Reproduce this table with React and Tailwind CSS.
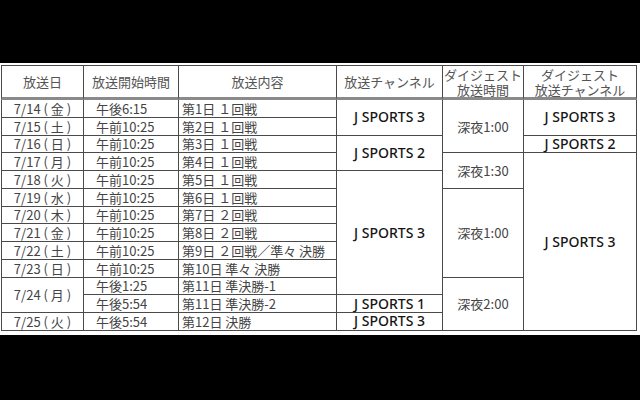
const rows = [
  { date: "7/14 ( 金 )", time: "午後6:15", content: "第1日 １回戦" },
  { date: "7/15 ( 土 )", time: "午前10:25", content: "第2日 １回戦" },
  { date: "7/16 ( 日 )", time: "午前10:25", content: "第3日 １回戦" },
  { date: "7/17 ( 月 )", time: "午前10:25", content: "第4日 １回戦" },
  { date: "7/18 ( 火 )", time: "午前10:25", content: "第5日 １回戦" },
  { date: "7/19 ( 水 )", time: "午前10:25", content: "第6日 １回戦" },
  { date: "7/20 ( 木 )", time: "午前10:25", content: "第7日 ２回戦" },
  { date: "7/21 ( 金 )", time: "午前10:25", content: "第8日 ２回戦" },
  { date: "7/22 ( 土 )", time: "午前10:25", content: "第9日 ２回戦／準々 決勝" },
  { date: "7/23 ( 日 )", time: "午前10:25", content: "第10日 準々 決勝" },
  { date: "7/24 ( 月 )", dateSpan: 2, time: "午後1:25", content: "第11日 準決勝-1" },
  { date: null, time: "午後5:54", content: "第11日 準決勝-2" },
  { date: "7/25 ( 火 )", time: "午後5:54", content: "第12日 決勝" },
];

// cells that start at a row index, with their rowspan
const channel = { 0: ["J SPORTS 3", 2], 2: ["J SPORTS 2", 2], 4: ["J SPORTS 3", 7], 11: ["J SPORTS 1", 1], 12: ["J SPORTS 3", 1] };
const digestTime = { 0: ["深夜1:00", 3], 3: ["深夜1:30", 2], 5: ["深夜1:00", 5], 10: ["深夜2:00", 3] };
const digestCh = { 0: ["J SPORTS 3", 2], 2: ["J SPORTS 2", 1], 3: ["J SPORTS 3", 10] };

const cell = "border-r border-b border-[#4a4a4a] p-0 leading-none";
const jp = "text-[13px] text-[#444]";
const js = "text-center text-[14px] font-medium text-[#151515] font-['Noto_Sans',sans-serif]";
const head = "border-t border-b-[3px] border-b-[#8a8a8a] font-normal text-[13px] text-[#555] text-center";

export default function App() {
  return (
    <div className="w-[640px] h-[400px] bg-black flex flex-col font-['Noto_Sans_CJK_JP',sans-serif]">
      <div className="h-[63px]" />
      <div className="h-[272px] bg-white pl-[1px] pt-[2px]">
        <table className="w-[636px] border-separate border-spacing-0 table-fixed">
          <colgroup>
            <col className="w-[83px]" />
            <col className="w-[95px]" />
            <col className="w-[158px]" />
            <col className="w-[106px]" />
            <col className="w-[81px]" />
            <col className="w-[113px]" />
          </colgroup>
          <thead>
            <tr className="h-[35px]">
              {["放送日", "放送開始時間", "放送内容", "放送チャンネル"].map((h, i) => (
                <th key={h} className={`${cell} ${head} ${i === 0 ? "border-l" : ""}`}>
                  {h}
                </th>
              ))}
              <th className={`${cell} ${head} !leading-[15px]`}>
                ダイジェスト<br />放送時間
              </th>
              <th className={`${cell} ${head} !leading-[15px]`}>
                ダイジェスト<br />放送チャンネル
              </th>
            </tr>
          </thead>
          <tbody>
            {rows.map((r, i) => (
              <tr key={i} className="h-[17.75px]">
                {r.date && (
                  <td rowSpan={r.dateSpan || 1} className={`${cell} border-l ${jp} text-center whitespace-pre`}>
                    {r.date}
                  </td>
                )}
                <td className={`${cell} ${jp} pl-[12px]`}>{r.time}</td>
                <td className={`${cell} ${jp} pl-[3px] whitespace-nowrap`}>{r.content}</td>
                {channel[i] && (
                  <td rowSpan={channel[i][1]} className={`${cell} ${js}`}>
                    {channel[i][0]}
                  </td>
                )}
                {digestTime[i] && (
                  <td rowSpan={digestTime[i][1]} className={`${cell} ${jp} text-center`}>
                    {digestTime[i][0]}
                  </td>
                )}
                {digestCh[i] && (
                  <td rowSpan={digestCh[i][1]} className={`${cell} ${js}`}>
                    {digestCh[i][0]}
                  </td>
                )}
              </tr>
            ))}
          </tbody>
        </table>
      </div>
      <div className="flex-1" />
    </div>
  );
}
